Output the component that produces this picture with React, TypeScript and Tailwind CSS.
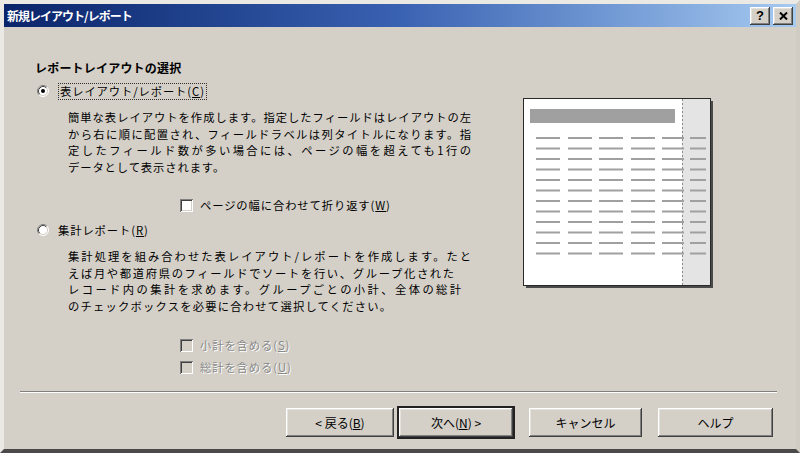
const bevel =
  "bg-[#d4d0c8] shadow-[inset_-1px_-1px_#404040,inset_1px_1px_#ffffff,inset_-2px_-2px_#808080,inset_2px_2px_#e4e2dc]";

function Radio({ checked }: { checked?: boolean }) {
  return (
    <svg width="12" height="12" viewBox="0 0 12 12" className="shrink-0">
      <circle cx="6" cy="6" r="5" fill="#fff" />
      <path d="M2.11 9.89 A5.5 5.5 0 0 1 9.89 2.11" stroke="#808080" fill="none" />
      <path d="M9.89 2.11 A5.5 5.5 0 0 1 2.11 9.89" stroke="#fff" fill="none" />
      <path d="M2.82 9.18 A4.5 4.5 0 0 1 9.18 2.82" stroke="#404040" fill="none" />
      <path d="M9.18 2.82 A4.5 4.5 0 0 1 2.82 9.18" stroke="#d4d0c8" fill="none" />
      {checked && <circle cx="6" cy="6" r="2" fill="#000" />}
    </svg>
  );
}

function Check({ disabled }: { disabled?: boolean }) {
  return (
    <span
      className={
        "block w-[13px] h-[13px] shrink-0 shadow-[inset_1px_1px_#808080,inset_-1px_-1px_#ffffff,inset_2px_2px_#404040,inset_-2px_-2px_#d4d0c8] " +
        (disabled ? "bg-[#d4d0c8]" : "bg-white")
      }
    />
  );
}

function Btn({ w, focus, children }: { w: string; focus?: boolean; children: React.ReactNode }) {
  return (
    <div
      className={`${w} h-[29px] flex items-center justify-center text-[12px] ${bevel} ${
        focus ? "outline-2 outline-solid outline-[#222]" : ""
      }`}
    >
      {children}
    </div>
  );
}

const rows = Array.from({ length: 12 }, (_, i) => 137 + i * 10.5);
const cols = [
  [536, 24],
  [568, 24],
  [599, 24],
  [631, 24],
  [662, 22],
  [690, 16],
];

export default function App() {
  return (
    <div className="w-[800px] h-[453px] overflow-hidden bg-[#d4d0c8] border-t-4 border-l-4 border-r-4 border-b-4 border-t-[#ebe9e4] border-l-[#ebe9e4] border-r-[#d0ccc4] border-b-[#4a4a4a] flex flex-col text-black font-['Noto_Sans_CJK_JP','Noto_Sans',sans-serif]">
      {/* title bar */}
      <div className="h-[23px] shrink-0 flex items-center justify-between pl-[3px] pr-[3px] bg-linear-to-r from-[#0a246a] via-[#3a62b2] to-[#a6caf0]">
        <span className="text-white font-bold text-[12px] tracking-[-1px] leading-none">
          新規レイアウト/レポート
        </span>
        <div className="flex gap-[3px]">
          <div className={`w-[20px] h-[18px] flex items-center justify-center font-bold text-[13px] leading-none font-['Liberation_Sans',sans-serif] ${bevel}`}>
            ?
          </div>
          <div className={`w-[20px] h-[18px] flex items-center justify-center ${bevel}`}>
            <svg width="9" height="8" viewBox="0 0 9 8">
              <path d="M1 0.5 L8 7.5 M8 0.5 L1 7.5" stroke="#000" strokeWidth="2" />
            </svg>
          </div>
        </div>
      </div>

      {/* body */}
      <div className="flex pl-[31px]">
        <div className="w-[485px] pt-[33px] text-[11.3px] tracking-[0.9px] leading-[16.5px]">
          <div className="font-bold text-[12px] tracking-[0.2px] leading-[16px]">レポートレイアウトの選択</div>

          <div className="mt-[6px] h-[18px] grid grid-cols-[23px_auto] items-center justify-start">
            <div className="pl-[2px]">
              <Radio checked />
            </div>
            <div className="border border-dotted border-[#303030] px-[1px] leading-[15px]">
              表レイアウト/レポート(<span className="underline">C</span>)
            </div>
          </div>

          <div className="mt-[9px] pl-[33px] whitespace-nowrap">
            <div className="w-[404px] [text-align-last:justify]">簡単な表レイアウトを作成します。指定したフィールドはレイアウトの左</div>
            <div className="w-[404px] [text-align-last:justify]">から右に順に配置され、フィールドラベルは列タイトルになります。指</div>
            <div className="w-[404px] [text-align-last:justify]">定したフィールド数が多い場合には、ページの幅を超えても1行の</div>
            <div>データとして表示されます。</div>
          </div>

          <div className="mt-[22px] h-[16px] ml-[145px] flex items-center gap-[7px]">
            <Check />
            <span>
              ページの幅に合わせて折り返す(<span className="underline">W</span>)
            </span>
          </div>

          <div className="mt-[8px] h-[18px] grid grid-cols-[23px_auto] items-center justify-start">
            <div className="pl-[2px]">
              <Radio />
            </div>
            <div>
              集計レポート(<span className="underline">R</span>)
            </div>
          </div>

          <div className="mt-[9px] pl-[33px] whitespace-nowrap">
            <div className="w-[404px] [text-align-last:justify]">集計処理を組み合わせた表レイアウト/レポートを作成します。たと</div>
            <div className="w-[387px] [text-align-last:justify]">えば月や都道府県のフィールドでソートを行い、グループ化された</div>
            <div className="w-[394px] [text-align-last:justify]">レコード内の集計を求めます。グループごとの小計、全体の総計</div>
            <div className="w-[324px] [text-align-last:justify]">のチェックボックスを必要に合わせて選択してください。</div>
          </div>

          <div className="mt-[23px] h-[16px] ml-[145px] flex items-center gap-[7px] text-[#8a8a8a] [text-shadow:1px_1px_0_#fff]">
            <Check disabled />
            <span>
              小計を含める(<span className="underline">S</span>)
            </span>
          </div>
          <div className="mt-[6px] h-[16px] ml-[145px] flex items-center gap-[7px] text-[#8a8a8a] [text-shadow:1px_1px_0_#fff]">
            <Check disabled />
            <span>
              総計を含める(<span className="underline">U</span>)
            </span>
          </div>
        </div>

        <div className="pt-[68px]">
          <svg width="196" height="196" viewBox="520 95 196 196">
            <rect x="526" y="101" width="187" height="187" fill="#4a4a4a" />
            <rect x="523.5" y="98.5" width="187" height="187" fill="#fff" stroke="#2a2a2a" />
            <rect x="682" y="99" width="28" height="186" fill="#e4e4e4" />
            <line x1="682.5" y1="99" x2="682.5" y2="285" stroke="#8a8a8a" strokeDasharray="2 2" />
            <rect x="530" y="109" width="145" height="14" fill="#a0a0a0" />
            {rows.map((y) =>
              cols.map(([x, w]) => (
                <rect key={`${y}-${x}`} x={x} y={y} width={w} height="2" fill="#a0a0a0" />
              ))
            )}
          </svg>
        </div>
      </div>

      {/* separator */}
      <div className="mt-[16px] ml-[16px] mr-[19px] border-t border-t-[#808080] border-b border-b-white" />

      {/* buttons */}
      <div className="mt-[15px] flex justify-end pr-[23px] text-[12px]">
        <Btn w="w-[108px]">
          &lt; 戻る(<span className="underline">B</span>)
        </Btn>
        <div className="ml-[5px]">
          <Btn w="w-[114px]" focus>
            次へ(<span className="underline">N</span>) &gt;
          </Btn>
        </div>
        <div className="ml-[16px]">
          <Btn w="w-[113px]">キャンセル</Btn>
        </div>
        <div className="ml-[16px]">
          <Btn w="w-[115px]">ヘルプ</Btn>
        </div>
      </div>
    </div>
  );
}
